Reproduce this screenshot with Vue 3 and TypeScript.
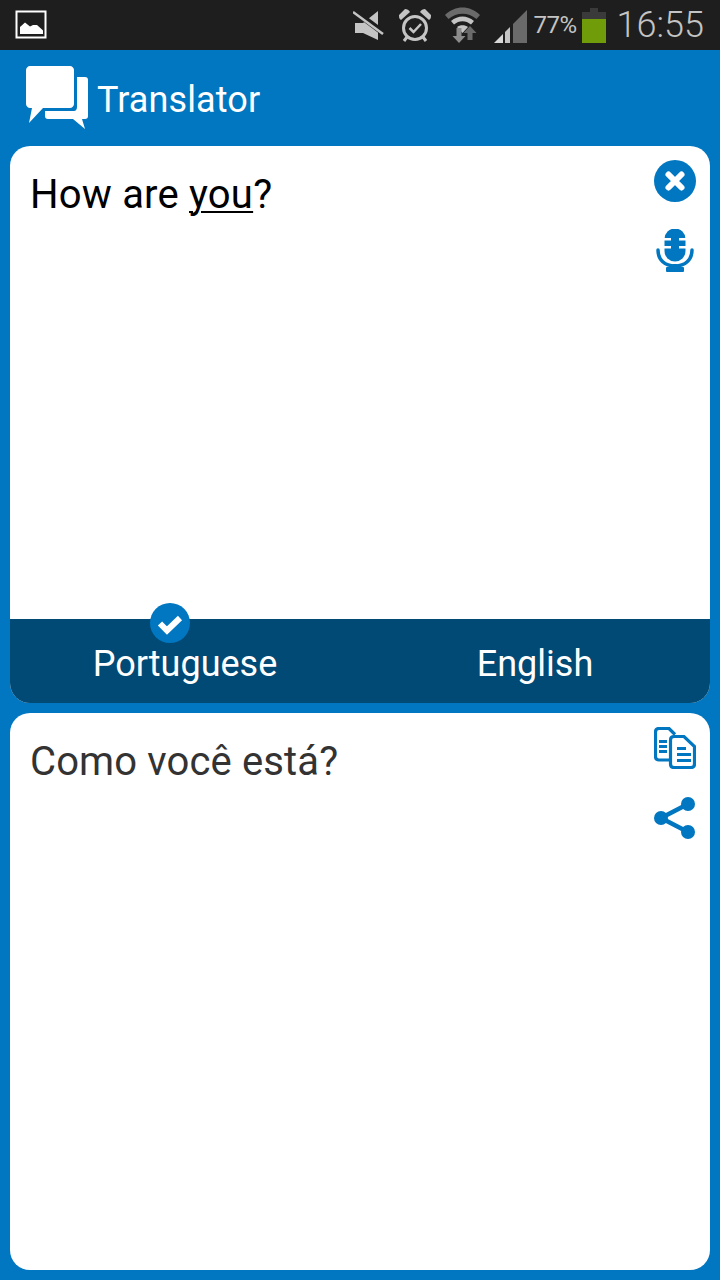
<template>
  <div class="screen">
    <header class="status-bar">
      <svg class="gallery" width="32" height="29" viewBox="0 0 32 29">
        <rect x="1.500" y="1.500" width="29" height="26" fill="none" stroke="#fff" stroke-width="2" />
        <path d="M5 24v-7l5-4.500 5 4 3-1.500 4 0 5 4.500 1 1v3.500z" fill="#fff" />
      </svg>
      <div class="status-right">
        <svg class="ic-mute" width="32" height="32" viewBox="0 0 32 32">
          <path d="M2 14h8L25 2v29L10 24H2z" fill="#c4c4c4" />
          <path d="M0 1l32 24" stroke="#1e1e1e" stroke-width="6" />
          <path d="M0 3l30 22" stroke="#c4c4c4" stroke-width="2.500" />
        </svg>
        <svg class="ic-alarm" width="34" height="34" viewBox="0 0 34 34">
          <circle cx="16" cy="20" r="11.500" fill="none" stroke="#c4c4c4" stroke-width="3" />
          <path d="M10.500 20l4 4L22 16" fill="none" stroke="#c4c4c4" stroke-width="2.500" />
          <path d="M0 7l6-6c2 0 4 1 5 3L2 12C0 11 0 9 0 7zM32 7l-6-6c-2 0-4 1-5 3l9 8c2-1 2-3 2-5z" fill="#c4c4c4" />
          <path d="M8 29l-3 4M24 29l3 4" stroke="#c4c4c4" stroke-width="3" />
        </svg>
        <svg class="ic-wifi" width="36" height="36" viewBox="0 0 36 36">
          <path d="M0 8C10-2 25-2 35 8l-3.500 4C23 5 12 5 3.500 12z" fill="#6a6a6a" />
          <path d="M6 14c7-6 16-6 23 0l-3 3.500c-5-4.500-12-4.500-17 0z" fill="#c4c4c4" />
          <path d="M12 20c3-2.500 8-2.500 11 0l-5.500 6z" fill="#c4c4c4" />
          <path d="M11.500 21h5v8h4l-6.500 7-6.500-7h4z" fill="#8c8c8c" />
          <path d="M22.500 33v-7h-4l6.500-7 6.500 7h-4v7z" fill="#6a6a6a" />
        </svg>
        <svg class="ic-signal" width="34" height="36" viewBox="0 0 34 36">
          <path d="M0 35l9-9v9z" fill="#d8d8d8" />
          <path d="M11 35V24l5-5v16z" fill="#c4c4c4" />
          <path d="M19 35V16L33 2v33z" fill="#6a6a6a" />
        </svg>
        <span class="battery-text">77%</span>
        <div class="battery">
          <div class="battery-cap"></div>
          <div class="battery-body"><div class="battery-fill"></div></div>
        </div>
        <span class="clock">16:55</span>
      </div>
    </header>

    <div class="app-bar">
      <svg class="logo" width="62" height="64" viewBox="0 0 62 64">
        <path d="M51 11h8c2 0 3 1 3 3v36c0 2-1 3-3 3h-3l3 10-12-10H22c-2 0-3-1-3-3v-5h29c2 0 3-2 3-4z" fill="#fff" />
        <path d="M4 0h40c2 0 4 2 4 4v34c0 2-2 4-4 4H17L3 57l3-15H4c-2 0-4-2-4-4V4c0-2 2-4 4-4z" fill="#fff" />
      </svg>
      <span class="app-title">Translator</span>
    </div>

    <main class="content">
      <section class="card source-card">
        <div class="card-body">
          <p class="source-text">How are <span class="composing">you</span>?</p>
          <div class="actions">
            <svg width="42" height="42" viewBox="0 0 42 42">
              <circle cx="21" cy="21" r="21" fill="#0077c0" />
              <path d="M14.500 14.500l13 13M27.500 14.500l-13 13" stroke="#fff" stroke-width="6" stroke-linecap="round" />
            </svg>
            <svg class="mic" width="38" height="43" viewBox="0 0 38 43">
              <path d="M8.500 10a10.500 10.500 0 0 1 21 0v12a10.500 10.500 0 0 1-21 0z" fill="#0077c0" />
              <path d="M8 9h7v2.500H8zM23 9h7v2.500h-7zM8 17h7v2.500H8zM23 17h7v2.500h-7z" fill="#fff" />
              <path d="M2 21c0 10 7 16 17 16s17-6 17-16" fill="none" stroke="#0077c0" stroke-width="3.500" stroke-linecap="round" />
              <rect x="10" y="38" width="18" height="5" rx="1" fill="#0077c0" />
              <rect x="17" y="35" width="4" height="4" fill="#0077c0" />
            </svg>
          </div>
        </div>
        <div class="lang-bar">
          <button class="lang selected">
            <svg class="check" width="40" height="40" viewBox="0 0 40 40">
              <circle cx="20" cy="20" r="20" fill="#0077c0" />
              <path d="M10 20.500l7 7 13-12.500" fill="none" stroke="#fff" stroke-width="6" />
            </svg>
            Portuguese
          </button>
          <button class="lang">English</button>
        </div>
      </section>

      <section class="card result-card">
        <div class="card-body">
          <p class="result-text">Como você está?</p>
          <div class="actions result-actions">
            <svg width="42" height="42" viewBox="0 0 42 42">
              <path d="M15 33H5c-2.500 0-3.500-1.500-3.500-3.500V5C1.500 3 2.500 1.500 5 1.500h10l6 6" fill="none" stroke="#0077c0" stroke-width="3.200" />
              <path d="M5 13h8v3H5zM5 18h8v3H5zM5 23h8v3H5z" fill="#0077c0" />
              <path d="M20 9.500h10l10.500 10V37c0 2.500-1.500 3.500-3.500 3.500H20c-2.500 0-3.500-1.500-3.500-3.500V13c0-2.500 1-3.500 3.500-3.500z" fill="#fff" stroke="#0077c0" stroke-width="3.200" />
              <path d="M23 20h9v3h-9zM23 26h14v3H23zM23 32h14v3H23z" fill="#0077c0" />
            </svg>
            <svg width="42" height="42" viewBox="0 0 42 42">
              <path d="M34 7L7 21l27 14" fill="none" stroke="#0077c0" stroke-width="4.500" />
              <circle cx="34" cy="7" r="7" fill="#0077c0" />
              <circle cx="7" cy="21" r="7" fill="#0077c0" />
              <circle cx="34" cy="35" r="7" fill="#0077c0" />
            </svg>
          </div>
        </div>
      </section>
    </main>
  </div>
</template>

<script setup lang="ts">
// static screen, nothing to wire up
</script>

<style>
html,
body {
  margin: 0;
  background: #0077c0;
}
</style>

<style scoped>
.screen {
  display: flex;
  flex-direction: column;
  width: 720px;
  height: 1280px;
  overflow: hidden;
  background: #0077c0;
  font-family: Roboto, sans-serif;
}

.status-bar {
  display: flex;
  align-items: center;
  justify-content: space-between;
  flex: 0 0 50px;
  padding: 0 16px 0 15px;
  background: #1e1e1e;
  box-sizing: border-box;
}

.gallery {
  margin-top: -2px;
}

.status-right {
  display: flex;
  align-items: flex-start;
  align-self: stretch;
}

.ic-mute {
  margin: 9px 14px 0 0;
}

.ic-alarm {
  margin: 8px 12px 0 0;
}

.ic-wifi {
  margin: 7px 13px 0 0;
}

.ic-signal {
  margin: 8px 6px 0 0;
}

.battery-text {
  margin-right: 5px;
  color: #c4c4c4;
  font-size: 24px;
  letter-spacing: -0.5px;
  line-height: 50px;
}

.battery {
  display: flex;
  flex-direction: column;
  align-items: center;
  width: 24px;
  height: 35px;
  margin: 8px 11px 0 0;
}

.battery-cap {
  width: 8px;
  height: 4px;
  background: #3a3a3a;
}

.battery-body {
  display: flex;
  flex: 1;
  align-items: flex-end;
  width: 100%;
  background: #3a3a3a;
}

.battery-fill {
  width: 100%;
  height: 77%;
  background: #6f9c08;
}

.clock {
  color: #c4c4c4;
  font-size: 36px;
  font-weight: 300;
  line-height: 50px;
}

.app-bar {
  display: flex;
  align-items: center;
  flex: 0 0 96px;
  padding-left: 26px;
  box-sizing: border-box;
  gap: 9px;
}

.app-title {
  margin-top: 3px;
  color: #fff;
  font-size: 36px;
  letter-spacing: 0.1px;
  line-height: 44px;
}

.content {
  display: flex;
  flex: 1;
  flex-direction: column;
  gap: 10px;
  padding: 0 10px 10px;
  min-height: 0;
}

.card {
  display: flex;
  flex: 1;
  flex-direction: column;
  border-radius: 20px;
  background: #fff;
  overflow: hidden;
}

.card-body {
  display: flex;
  flex: 1;
  justify-content: space-between;
  min-height: 0;
  padding: 14px 14px 0 20px;
}

.source-text,
.result-text {
  margin: 0;
  padding-top: 1px;
  font-size: 40px;
  line-height: 68px;
}

.source-text {
  color: #000;
  letter-spacing: 0.2px;
}

.result-text {
  color: #333;
  letter-spacing: 0.13px;
}

.composing {
  text-decoration: underline;
  text-decoration-thickness: 2px;
  text-underline-offset: 3px;
}

.actions {
  display: flex;
  flex-direction: column;
  align-items: center;
  gap: 27px;
  width: 42px;
}

.result-actions {
  gap: 28px;
}

.lang-bar {
  display: grid;
  grid-template-columns: 350px 350px;
  flex: 0 0 84px;
  background: #004a75;
}

.lang {
  position: relative;
  padding: 6px 0 0;
  border: 0;
  background: transparent;
  color: #fff;
  font-family: inherit;
  font-size: 36px;
}

.check {
  position: absolute;
  left: 140px;
  top: -16px;
}
</style>
